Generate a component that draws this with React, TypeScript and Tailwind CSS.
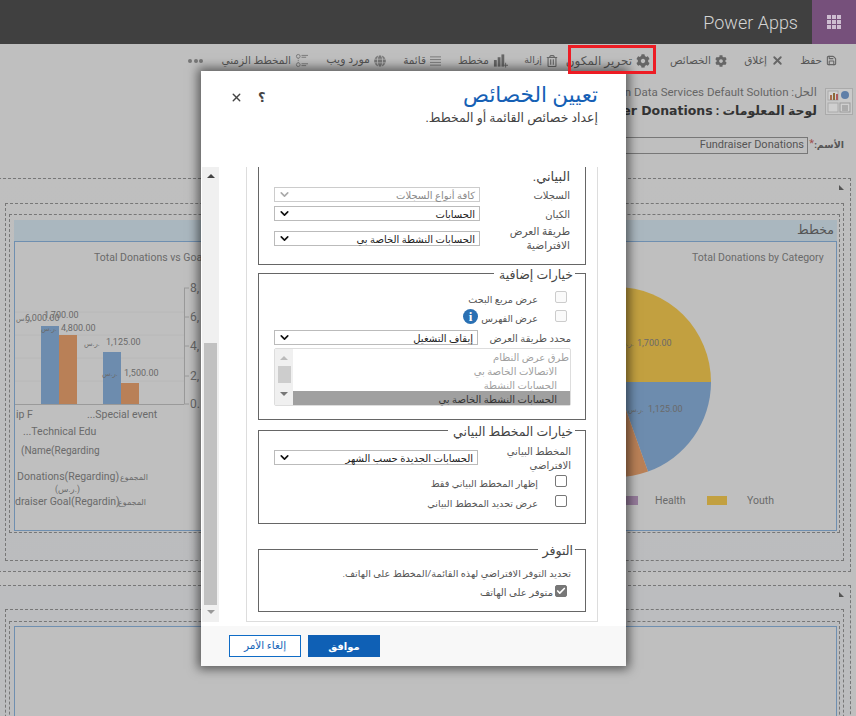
import React from "react";
import { X, Save, ChevronDown, Check } from "lucide-react";
import { FaCog, FaRegTrashAlt, FaGlobe } from "react-icons/fa";

const UI_FONT = "font-['Roboto','DejaVu_Sans',sans-serif]";

function ChartIcon() {
  return (
    <svg width="15" height="15" viewBox="0 0 16 15" fill="#666">
      <rect x="1" y="7" width="3" height="7" />
      <rect x="5" y="4" width="3" height="10" />
      <rect x="9" y="1" width="3" height="13" />
      <path d="M13 10h1v2h2v1h-2v2h-1v-2h-1v-1h1z" />
    </svg>
  );
}

function ListIcon() {
  return (
    <svg width="11" height="12" viewBox="0 0 12 12" fill="#777">
      <rect y="1" width="12" height="1" />
      <rect y="4" width="12" height="1" />
      <rect y="7" width="12" height="1" />
      <rect y="10" width="12" height="1" />
    </svg>
  );
}

function TimelineIcon() {
  return (
    <svg width="13" height="15" viewBox="0 0 14 15" fill="none" stroke="#777">
      <circle cx="3.5" cy="3" r="2" />
      <circle cx="3.5" cy="12" r="2" />
      <path d="M3.5 5v5" strokeDasharray="1 1" />
      <path d="M7 2h7M7 4h5M7 11h7M7 13h5" />
    </svg>
  );
}

function GridIcon() {
  return (
    <svg width="14" height="14" viewBox="0 0 14 14" fill="#cdbdd0">
      {[0, 5, 10].map((y) =>
        [0, 5, 10].map((x) => <rect key={`${x}-${y}`} x={x} y={y} width="4" height="4" />)
      )}
    </svg>
  );
}

function FormIcon() {
  return (
    <svg width="28" height="27" viewBox="0 0 28 27">
      <rect x="0.5" y="0.5" width="27" height="26" fill="#c9c9c9" stroke="#aaa" />
      <rect x="3" y="3" width="10" height="9" fill="#d2d2d2" stroke="#aaa" />
      <rect x="5" y="7" width="2" height="5" fill="#a86b4a" />
      <rect x="8" y="5" width="2" height="7" fill="#8a6a3a" />
      <rect x="11" y="6" width="2" height="6" fill="#b05a5a" />
      <circle cx="20" cy="7" r="4" fill="#5f7fa8" />
      <rect x="3" y="15" width="10" height="9" fill="#cfcfcf" stroke="#aaa" />
      <rect x="15" y="15" width="10" height="9" fill="#cfcfcf" stroke="#999" />
      <path d="M17 18h6M17 20h6M17 22h6" stroke="#888" />
    </svg>
  );
}

const toolbarItems = [
  { label: "حفظ", width: "w-[21px]", size: "text-[10.5px]", icon: <Save size={11} color="#666" strokeWidth={2.4} /> },
  { label: "إغلاق", width: "w-[23px]", size: "text-[10.5px]", icon: <X size={13} color="#666" strokeWidth={3.5} /> },
  { label: "الخصائص", width: "w-[44px]", size: "text-[10.5px]", icon: <FaCog size={12} color="#666" /> },
  { label: "تحرير المكون", width: "w-[57px]", size: "text-[12px]", icon: <FaCog size={14} color="#666" /> },
  { label: "إزالة", width: "w-[17px]", size: "text-[9.5px]", icon: <FaRegTrashAlt size={12} color="#666" /> },
  { label: "مخطط", width: "w-[31px]", size: "text-[10.5px]", icon: <ChartIcon /> },
  { label: "قائمة", width: "w-[23px]", size: "text-[10.5px]", icon: <ListIcon /> },
  { label: "مورد ويب", width: "w-[45px]", size: "text-[11px]", icon: <FaGlobe size={12} color="#777" /> },
  { label: "المخطط الزمني", width: "w-[68px]", size: "text-[10.5px]", icon: <TimelineIcon /> },
];

function Toolbar() {
  return (
    <div dir="rtl" className="flex h-[34px] flex-none items-center gap-[17px] pr-[19px] pb-[1px]">
      {toolbarItems.map((item) => (
        <div key={item.label} className="flex items-center gap-[4px] text-[#555]">
          {item.icon}
          <span className={`whitespace-nowrap ${item.width} ${item.size}`}>{item.label}</span>
        </div>
      ))}
      <span className="mr-[3px] flex gap-[1.5px]">
        <i className="h-[4px] w-[4px] rounded-full bg-[#777]" />
        <i className="h-[4px] w-[4px] rounded-full bg-[#777]" />
        <i className="h-[4px] w-[4px] rounded-full bg-[#777]" />
      </span>
    </div>
  );
}

function CornerMark() {
  return <div className="absolute right-[6px] top-[6px] h-0 w-0 border-b-[5px] border-r-[5px] border-b-[#555] border-r-transparent" />;
}

function ChartsDrawing() {
  const label = "#6a6a6a";
  return (
    <svg width="820" height="288" viewBox="15 242 820 288" className="block" fontFamily="Roboto, 'DejaVu Sans', sans-serif" fontSize="10.5" fill={label}>
      <text x="94" y="261">Total Donations vs Goal</text>
      <text x="692" y="261">Total Donations by Category</text>

      {/* left chart */}
      <path d="M15 312H184M15 335H184M15 358H184M15 381H184" stroke="#b8b8b8" />
      <path d="M15 404.5H184M184.5 288V404M184 288h5M184 317h5M184 346h5M184 376h5M184 404h5" stroke="#9a9a9a" />
      <rect x="41" y="326" width="18" height="78" fill="#6d8cae" />
      <rect x="59" y="335" width="18" height="69" fill="#b98057" />
      <rect x="103" y="352" width="18" height="52" fill="#6d8cae" />
      <rect x="121" y="383" width="18" height="21" fill="#b98057" />
      <g fontSize="12">
        <text x="190" y="292">8,</text>
        <text x="190" y="321">6,</text>
        <text x="190" y="350">4,</text>
        <text x="190" y="380">2,</text>
        <text x="190" y="408">0.</text>
      </g>
      <g fontSize="9">
        <text x="44" y="318">1,700.00</text>
        <text x="25" y="321">6,000.00</text>
        <text x="16" y="321" fontSize="7">ر.س.</text>
        <text x="61" y="331">4,800.00</text>
        <text x="41" y="331" fontSize="7">ر.س.</text>
        <text x="106" y="345">1,125.00</text>
        <text x="84" y="346" fontSize="7">ر.س.</text>
        <text x="124" y="376">1,500.00</text>
        <text x="102" y="376" fontSize="7">ر.س.</text>
      </g>
      <text x="16" y="418">ip F</text>
      <text x="87" y="418">...Special  event</text>
      <text x="23" y="435">...Technical  Edu</text>
      <text x="21" y="454" fontSize="10">(Name(Regarding</text>
      <text x="17" y="480">Donations(Regarding)</text>
      <text x="120" y="480" fontSize="8">المجموع</text>
      <text x="55" y="492" fontSize="8.5">(ر.س.)</text>
      <text x="15" y="505">draiser Goal(Regardin)</text>
      <text x="118" y="505" fontSize="8">المجموع</text>

      {/* right chart */}
      <path d="M616 382V287A95 95 0 0 1 711 382Z" fill="#c2a040" />
      <path d="M616 382H711A95 95 0 0 1 648 471.5Z" fill="#6d8cae" />
      <path d="M616 382L648 471.5A95 95 0 0 1 616 477Z" fill="#b98057" />
      <text x="637" y="346" fontSize="9">1,700.00</text>
      <text x="618" y="346" fontSize="7">ر.س.</text>
      <text x="648" y="412" fontSize="9">1,125.00</text>
      <text x="628" y="412" fontSize="7">ر.س.</text>
      <rect x="610" y="496" width="28" height="9" fill="#957b9b" />
      <text x="655" y="504">Health</text>
      <rect x="707" y="496" width="20" height="9" fill="#c2a040" />
      <text x="747" y="504">Youth</text>
    </svg>
  );
}

function Background() {
  return (
    <div className={`flex h-full flex-col bg-[#bfbfbf] ${UI_FONT}`}>
      <div className="flex h-[44px] flex-none items-center justify-end bg-[#404040]">
        <span className="mr-[14px] text-[18px] font-light text-[#d4d4d4]">Power Apps</span>
        <div className="flex h-full w-[44px] items-center justify-center bg-[#76507b]">
          <GridIcon />
        </div>
      </div>
      <Toolbar />
      <div dir="rtl" className="mt-[10px] flex h-[28px] flex-none items-start gap-[8px] pr-[3px]">
        <FormIcon />
        <div className="-mt-[4px] flex flex-col">
          <div className="h-[17px] text-[11.5px] leading-[17px] text-[#666]">الحل: <span dir="ltr">Common Data Services Default Solution</span></div>
          <div className="h-[19px] text-[12.5px] font-bold leading-[19px] text-[#333]">لوحة المعلومات : <span dir="ltr" className="font-['DejaVu_Sans',sans-serif] text-[12.5px]">Fundraiser Donations</span></div>
        </div>
      </div>
      <div dir="rtl" className="mt-[21px] flex h-[17px] flex-none items-center pr-[12px]">
        <span className="w-[30px] text-[9.5px] font-bold text-[#555]">الأسم:</span>
        <span className="-mt-[4px] w-[6px] text-[11px] leading-none text-[#a05050]">*</span>
        <div className="flex h-[17px] w-[300px] items-center border border-[#777] pr-[3px] text-[11px] text-[#555]">
          Fundraiser Donations
        </div>
      </div>
      <div className="relative ml-[-2px] mr-[5px] mt-[24px] h-[394px] flex-none border border-dashed border-[#777] bg-gradient-to-b from-[#bfbfbf] to-[#bbbcbe] pt-[24px]">
        <CornerMark />
        <div className="mx-[6px] h-[358px] border border-dashed border-[#777] pt-[10px]">
          <div className="mx-[3px] h-[319px] border border-dashed border-[#777] pt-[5px]">
            <div className="ml-[4px] mr-[2px] flex h-[21px] items-center justify-end bg-[#aab7bf] pr-[3px] text-[12.5px] text-[#555]">
              مخطط
            </div>
            <div className="ml-[4px] mr-[2px] h-[290px] border border-[#6f8fb0] bg-[#bfbfbf]">
              <ChartsDrawing />
            </div>
          </div>
        </div>
      </div>
      <div className="relative ml-[-2px] mr-[5px] mt-[13px] h-[200px] flex-none border border-b-0 border-dashed border-[#777] bg-[#bcbdbf] pt-[23px]">
        <CornerMark />
        <div className="mx-[6px] h-[300px] border border-dashed border-[#777] pt-[11px]">
          <div className="mx-[3px] h-[280px] border border-dashed border-[#777] pt-[4px]">
            <div className="ml-[4px] mr-[2px] h-[200px] border border-[#6f8fb0] bg-[#bfbfbf]" />
          </div>
        </div>
      </div>
    </div>
  );
}

function Select({ text, width = "w-[206px]", disabled = false }: { text: string; width?: string; disabled?: boolean }) {
  return (
    <div className={`flex h-[15px] items-center justify-between border pl-[3px] pr-[4px] text-[10px] leading-none ${width} ${disabled ? "border-[#ccc] text-[#8a8a8a]" : "border-[#bbb] text-[#222]"}`}>
      <span className="whitespace-nowrap pt-[3px]">{text}</span>
      <ChevronDown size={13} strokeWidth={3} color={disabled ? "#aaa" : "#111"} />
    </div>
  );
}

function Box({ disabled = false, checked = false }: { disabled?: boolean; checked?: boolean }) {
  const tone = checked ? "border-[#777] bg-[#777]" : disabled ? "border-[#ccc] bg-[#fafafa]" : "border-[#777] bg-white";
  return (
    <div className={`flex h-[12px] w-[12px] flex-none items-center justify-center rounded-[2px] border ${tone}`}>
      {checked && <Check size={10} color="#fff" strokeWidth={4} />}
    </div>
  );
}

function CheckRow({ label, disabled = false, info = false, className = "" }: { label: string; disabled?: boolean; info?: boolean; className?: string }) {
  return (
    <div className={`flex h-[12px] items-center ${className}`}>
      <Box disabled={disabled} />
      <span className="mr-[17px] whitespace-nowrap pt-[6px] text-[9.6px] leading-none text-[#555]">{label}</span>
      {info && (
        <span className="mr-[3px] flex h-[15px] w-[15px] items-center justify-center rounded-full bg-[#2a70b3] font-['Liberation_Serif',serif] text-[13px] font-bold leading-none text-white">
          i
        </span>
      )}
    </div>
  );
}

function Group({ title, className, children }: { title: string; className: string; children: React.ReactNode }) {
  return (
    <fieldset className={`border border-[#666] pl-[15px] pr-[14px] ${className}`}>
      <legend className="ml-auto mr-[-4px] h-[2px] whitespace-nowrap pl-[5px] pr-[2px] text-[12.5px] leading-[6px] text-[#444]">{title}</legend>
      {children}
    </fieldset>
  );
}

function Dialog() {
  return (
    <div className={`absolute left-[201px] top-[71px] flex h-[595px] w-[425px] flex-col bg-white shadow-[0_0_10px_3px_rgba(0,0,0,0.55)] ${UI_FONT}`}>
      <div className="relative h-[96px] flex-none">
        <div className="absolute left-[29px] top-[20px] flex items-center gap-[15px] text-[#444]">
          <X size={13} strokeWidth={2.5} />
          <span className="text-[13px] font-bold leading-none">؟</span>
        </div>
        <div dir="rtl" className="pr-[28px] pt-[10px]">
          <div className="text-[21.5px] leading-[28px] text-[#1560b5]">تعيين الخصائص</div>
          <div className="text-[12.5px] leading-[18px] text-[#444]">إعداد خصائص القائمة أو المخطط.</div>
        </div>
      </div>

      <div className="flex h-[455px] flex-none">
        <div className="relative ml-[1px] flex w-[17px] flex-none flex-col items-center bg-[#f0f0f0]">
          <div className="mt-[7px] h-0 w-0 border-x-[4px] border-b-[4px] border-x-transparent border-b-[#444]" />
          <div className="mt-[165px] h-[262px] w-[13px] bg-[#c1c1c1]" />
          <div className="mt-[5px] h-0 w-0 border-x-[4px] border-t-[4px] border-x-transparent border-t-[#999]" />
        </div>
        <div dir="rtl" className="ml-[27px] w-[352px] border-x border-b border-[#ddd] px-[11px]">
          <div className="h-[98px] border-x border-b border-[#666] pl-[15px] pr-[15px]">
            <div className="h-[20px] text-[13px] leading-[20px] text-[#444]">البياني.</div>
            <div className="flex h-[15px] justify-between">
              <span className="text-[10px] leading-[18px] text-[#555]">السجلات</span>
              <Select text="كافة أنواع السجلات" disabled />
            </div>
            <div className="mt-[4px] flex h-[15px] justify-between">
              <span className="text-[10px] leading-[18px] text-[#555]">الكيان</span>
              <Select text="الحسابات" />
            </div>
            <div className="mt-[8px] flex justify-between">
              <span className="-mt-[4px] w-[70px] text-[10.5px] leading-[14px] text-[#555]">طريقة العرض الافتراضية</span>
              <div className="pt-[2px]"><Select text="الحسابات النشطة الخاصة بي" /></div>
            </div>
          </div>

          <Group title="خيارات إضافية" className="mt-[7px] h-[148px]">
            <CheckRow label="عرض مربع البحث" disabled className="mt-[17px] mr-[4px]" />
            <CheckRow label="عرض الفهرس" disabled info className="mt-[7px] mr-[4px]" />
            <div className="mt-[8px] flex h-[15px] justify-between">
              <span className="whitespace-nowrap text-[10px] leading-[18px] text-[#555]">محدد طريقة العرض</span>
              <Select text="إيقاف التشغيل" width="w-[204px]" />
            </div>
            <div className="mt-[3px] flex h-[58px] rounded-[2px] border border-[#ddd]">
              <div className="flex-1 text-[10px] leading-[17px] text-[#a0a0a0]">
                <div className="h-[14px] pr-[1px]">طرق عرض النظام</div>
                <div className="h-[14px] pr-[13px]">الاتصالات الخاصة بي</div>
                <div className="h-[14px] pr-[13px]">الحسابات النشطة</div>
                <div className="h-[14px] bg-[#a0a0a0] pr-[13px] text-[#333]">الحسابات النشطة الخاصة بي</div>
              </div>
              <div className="flex w-[18px] flex-col items-center bg-[#f0f0f0]">
                <div className="mt-[7px] h-0 w-0 border-x-[4px] border-b-[4px] border-x-transparent border-b-[#bbb]" />
                <div className="mt-[6px] h-[17px] w-[13px] bg-[#cdcdcd]" />
                <div className="mt-[9px] h-0 w-0 border-x-[4px] border-t-[4px] border-x-transparent border-t-[#777]" />
              </div>
            </div>
          </Group>

          <Group title="خيارات المخطط البياني" className="mt-[9px] h-[95px]">
            <div className="mt-[14px] flex justify-between">
              <span className="w-[80px] text-[10px] leading-[14px] text-[#555]">المخطط البياني الافتراضي</span>
              <div className="pt-[5px]"><Select text="الحسابات الجديدة حسب الشهر" width="w-[204px]" /></div>
            </div>
            <CheckRow label="إظهار المخطط البياني فقط" className="mt-[2px] mr-[4px]" />
            <CheckRow label="عرض تحديد المخطط البياني" className="mt-[8px] mr-[4px]" />
          </Group>

          <Group title="التوفر" className="mt-[24px] h-[64px]">
            <div className="mt-[16px] text-[9.7px] leading-[15px] text-[#555]">تحديد التوفر الافتراضي لهذه القائمة/المخطط على الهاتف.</div>
            <div className="mr-[4px] mt-[2px] flex items-center gap-[2px]">
              <Box checked />
              <span className="pt-[5px] text-[10px] leading-none text-[#555]">متوفر على الهاتف</span>
            </div>
          </Group>
        </div>
      </div>

      <div className="mt-[4px] flex h-[40px] flex-none items-start gap-[7px] bg-[#f8f8f8] pl-[28px] pt-[9px]">
        <button className="flex h-[22px] w-[72px] items-center justify-center border border-[#0f6cc6] bg-white text-[10.5px] text-[#1565b8]">إلغاء الأمر</button>
        <button className="flex h-[22px] w-[72px] items-center justify-center bg-[#0f60b5] text-[10px] font-bold text-white">موافق</button>
      </div>
    </div>
  );
}

export default function App() {
  return (
    <div className="relative h-[716px] w-[856px] overflow-hidden">
      <Background />
      <Dialog />
      <div className="pointer-events-none absolute left-[568px] top-[45px] h-[29px] w-[88px] border-[3px] border-[#ed1c24]" />
    </div>
  );
}
